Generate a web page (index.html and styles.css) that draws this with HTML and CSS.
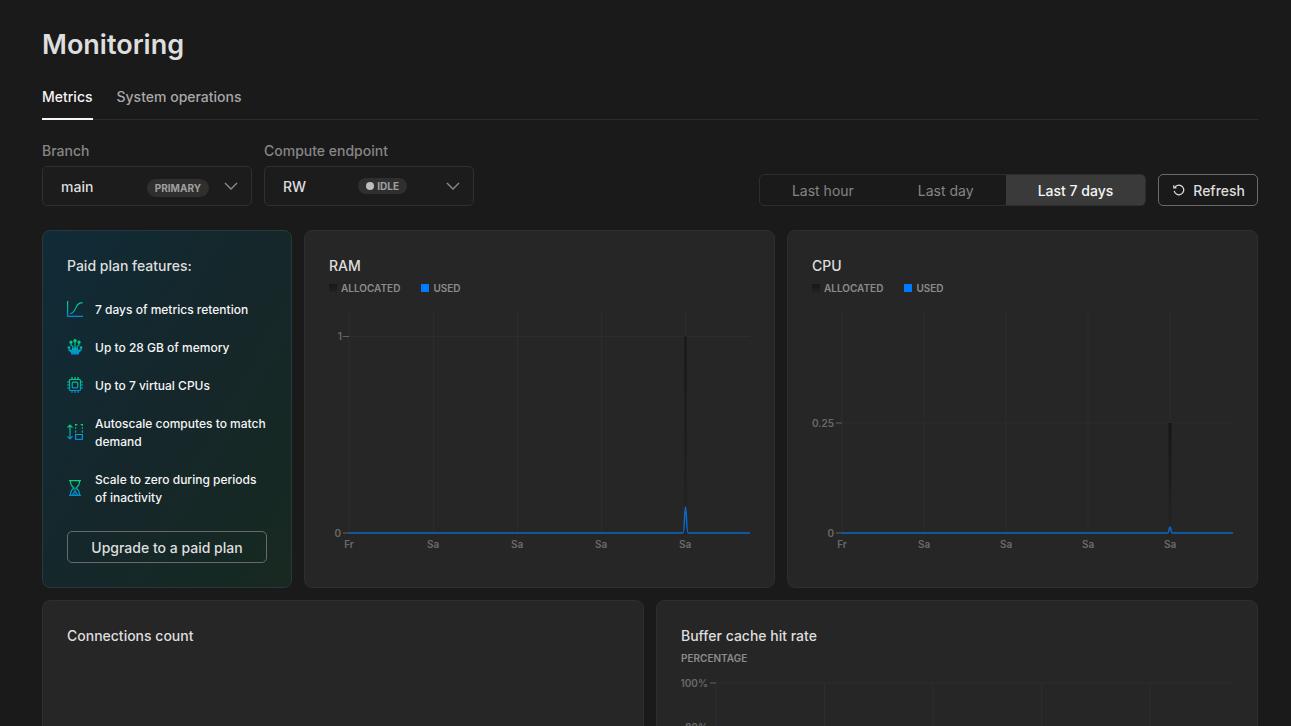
FILE: index.html
```html
<!DOCTYPE html>
<html lang="en">
<head>
<meta charset="utf-8">
<title>Monitoring</title>
<link rel="stylesheet" href="styles.css">
</head>
<body>
<svg class="defs" width="0" height="0" aria-hidden="true">
  <defs>
    <linearGradient id="brand" gradientUnits="userSpaceOnUse" x1="0" y1="0" x2="0" y2="16">
      <stop offset="0" stop-color="#00d878"/>
      <stop offset="1" stop-color="#0088dc"/>
    </linearGradient>
    <linearGradient id="allocated" x1="0" y1="0" x2="0" y2="1">
      <stop offset="0" stop-color="#161616"/>
      <stop offset="1" stop-color="#242424"/>
    </linearGradient>
  </defs>
</svg>
<main class="page">
  <h1 class="title">Monitoring</h1>
  <nav class="tabs">
    <a class="tab tab-active" href="#metrics">Metrics</a>
    <a class="tab" href="#operations">System operations</a>
  </nav>

  <section class="toolbar">
    <div class="field">
      <label class="label" for="branch">Branch</label>
      <div class="select-wrap">
        <select class="select" id="branch"><option>main</option></select>
        <span class="badge badge-primary">PRIMARY</span>
        <svg class="chevron" viewBox="0 0 14 8" width="14" height="8"><path d="M1 1l6 6 6-6"/></svg>
      </div>
    </div>
    <div class="field">
      <label class="label" for="endpoint">Compute endpoint</label>
      <div class="select-wrap">
        <select class="select" id="endpoint"><option>RW</option></select>
        <span class="badge badge-idle"><i class="dot"></i>IDLE</span>
        <svg class="chevron" viewBox="0 0 14 8" width="14" height="8"><path d="M1 1l6 6 6-6"/></svg>
      </div>
    </div>
    <div class="actions">
      <div class="segments">
        <button class="segment">Last hour</button>
        <button class="segment">Last day</button>
        <button class="segment segment-active">Last 7 days</button>
      </div>
      <button class="button">
        <svg class="refresh" viewBox="0 0 12 12" width="12" height="12"><path d="M2 3.200A4.800 4.800 0 1 1 1.200 6.800M.8 1.200v2.600h2.600"/></svg>
        Refresh
      </button>
    </div>
  </section>

  <section class="row row-top">
    <article class="card promo">
      <h2 class="card-title">Paid plan features:</h2>
      <ul class="features">
        <li class="feature">
          <svg class="icon" viewBox="0 0 16 16"><path d="M.6 0v15.400H16M3 12.600c7 0 4-11 12.600-11"/></svg>
          <span>7 days of metrics retention</span>
        </li>
        <li class="feature">
          <svg class="icon" viewBox="0 0 16 16"><g class="fill"><circle cx="8" cy="1.800" r="1.700"/><circle cx="4" cy="3.200" r="1.600"/><circle cx="12" cy="3.200" r="1.600"/><circle cx="2" cy="8.600" r="1.400"/><circle cx="14" cy="8.600" r="1.400"/><path d="M4 15.500v-2.300L2 11l1.200-.8L4.900 11V9.500l3.100-1.300 3.100 1.300V11l1.700-.8L14 11l-2 2.200v2.300z"/></g><path d="M8 3v6M4 4v2l1.800 1.600V10M12 4v2l-1.800 1.600V10M2 9v2.200l2.600 2M14 9v2.200l-2.600 2"/></svg>
          <span>Up to 28 GB of memory</span>
        </li>
        <li class="feature">
          <svg class="icon" viewBox="0 0 16 16"><rect x="2.500" y="2.500" width="11" height="11" rx="1"/><rect x="5.200" y="5.200" width="5.600" height="5.600" rx="1"/><path d="M5 0v2.500M8 0v2.500M11 0v2.500M5 13.500V16M8 13.500V16M11 13.500V16M0 5h2.500M0 8h2.500M0 11h2.500M13.500 5H16M13.500 8H16M13.500 11H16"/></svg>
          <span>Up to 7 virtual CPUs</span>
        </li>
        <li class="feature">
          <svg class="icon" viewBox="0 0 16 16"><path d="M3 1.200v13.600M.5 3.700L3 1.200l2.500 2.500M.5 12.300L3 14.800l2.500-2.500M8.600 10.500h6.800v4.900H8.600zM8.600 8.800V6.500M15.400 8.800V6.500M8.600 4.800V3.200M15.400 4.800V3.200M8.600 1.800V.600h1.700M15.400 1.800V.600h-1.700"/></svg>
          <span>Autoscale computes to match demand</span>
        </li>
        <li class="feature">
          <svg class="icon" viewBox="0 0 16 16"><path d="M2 .6h12M2 15.400h12M3.400.6c0 4 1 5 3.500 7.400-2.500 2.400-3.500 3.400-3.500 7.400M12.600.6c0 4-1 5-3.500 7.400 2.500 2.400 3.500 3.400 3.500 7.400M8 8.500v2M5.300 15L8 11l2.700 4M7.300 14h1.500"/></svg>
          <span>Scale to zero during periods of inactivity</span>
        </li>
      </ul>
      <button class="button button-wide">Upgrade to a paid plan</button>
    </article>

    <article class="card">
      <h2 class="card-title">RAM</h2>
      <div class="legend"><span class="key key-allocated">ALLOCATED</span><span class="key key-used">USED</span></div>
      <svg class="chart" viewBox="0 0 421 250" role="img" aria-label="RAM usage over the last 7 days">
        <path class="grid" d="M20 12v221M104.500 12v221M188.500 12v221M272.500 12v221M356.500 12v221M20 36.500h401"/>
        <path class="tick" d="M14 36.500h6M14 233h6"/>
        <path class="allocated" d="M355 233L355.500 36h2L358 233z"/>
        <path class="used" d="M20 233h334c1.500 0 1.500-26 2.500-26s1 26 2.500 26H421"/>
        <g class="axis axis-y"><text x="13" y="40">1</text><text x="12" y="237">0</text></g>
        <g class="axis axis-x"><text x="20" y="248">Fr</text><text x="104" y="248">Sa</text><text x="188" y="248">Sa</text><text x="272" y="248">Sa</text><text x="356" y="248">Sa</text></g>
      </svg>
    </article>

    <article class="card">
      <h2 class="card-title">CPU</h2>
      <div class="legend"><span class="key key-allocated">ALLOCATED</span><span class="key key-used">USED</span></div>
      <svg class="chart" viewBox="0 0 421 250" role="img" aria-label="CPU usage over the last 7 days">
        <path class="grid" d="M30 12v221M112 12v221M194 12v221M276 12v221M358 12v221M30 123h391"/>
        <path class="tick" d="M24 123h6M24 233h6"/>
        <path class="allocated" d="M356.500 233V123h3v110z"/>
        <path class="used" d="M30 233h325.500c1.500 0 1.500-6 2.500-6s1 6 2.500 6H421"/>
        <g class="axis axis-y"><text x="22" y="127">0.25</text><text x="22" y="237">0</text></g>
        <g class="axis axis-x"><text x="30" y="248">Fr</text><text x="112" y="248">Sa</text><text x="194" y="248">Sa</text><text x="276" y="248">Sa</text><text x="358" y="248">Sa</text></g>
      </svg>
    </article>
  </section>

  <section class="row row-bottom">
    <article class="card">
      <h2 class="card-title">Connections count</h2>
    </article>
    <article class="card">
      <h2 class="card-title">Buffer cache hit rate</h2>
      <div class="legend">PERCENTAGE</div>
      <svg class="chart" viewBox="0 0 552 250" role="img" aria-label="Buffer cache hit rate">
        <path class="grid" d="M35 13v200M143.500 13v200M252 13v200M360.500 13v200M469 13v200M35 13h517M35 57h517"/>
        <path class="tick" d="M29 13h6M29 57h6"/>
        <g class="axis axis-y"><text x="27" y="17">100%</text><text x="27" y="61">80%</text></g>
      </svg>
    </article>
  </section>
</main>
</body>
</html>
```

FILE: styles.css
```css
* {
  box-sizing: border-box;
}

body {
  margin: 0;
  height: 100vh;
  overflow: hidden;
  background: #1a1a1a;
  color: #dedede;
  font: 500 14px/20px Inter, "Liberation Sans", sans-serif;
}

button,
select {
  font: inherit;
  color: inherit;
}

.defs {
  position: absolute;
}

.page {
  padding: 25px 33px 0 42px;
}

.title {
  margin: 0;
  font-size: 27px;
  line-height: 40px;
  font-weight: 600;
}

.tabs {
  display: flex;
  gap: 24px;
  margin-top: 22px;
  border-bottom: 1px solid #2d2d2d;
}

.tab {
  margin-bottom: -1px;
  padding-bottom: 11px;
  border-bottom: 2px solid transparent;
  color: #a8a8a8;
  text-decoration: none;
}

.tab-active {
  color: #f5f5f5;
  border-color: #f5f5f5;
}

.toolbar {
  display: flex;
  align-items: flex-end;
  gap: 12px;
  margin-top: 21px;
}

.field {
  width: 210px;
}

.label {
  display: block;
  margin-bottom: 5px;
  color: #868686;
}

.select-wrap {
  position: relative;
}

.select {
  display: block;
  width: 100%;
  height: 40px;
  padding: 2px 18px 0;
  appearance: none;
  background: #1c1c1c;
  border: 1px solid #303030;
  border-radius: 5px;
}

.badge {
  position: absolute;
  display: flex;
  align-items: center;
  gap: 3px;
  padding: 0 8px;
  border-radius: 9px;
  background: #2f2f2f;
  color: #a0a0a0;
  font-size: 10px;
  font-weight: 700;
  pointer-events: none;
}

.badge-primary {
  top: 13px;
  right: 43px;
  line-height: 18px;
}

.badge-idle {
  top: 12px;
  right: 67px;
  line-height: 16px;
}

.dot {
  width: 8px;
  height: 8px;
  border-radius: 50%;
  background: #bdbdbd;
}

.chevron {
  position: absolute;
  top: 16px;
  right: 14px;
  fill: none;
  stroke: #8c8c8c;
  stroke-width: 1.4;
  pointer-events: none;
}

.actions {
  display: flex;
  gap: 12px;
  margin-left: auto;
}

.segments {
  display: flex;
  height: 32px;
  border: 1px solid #2d2d2d;
  border-radius: 5px;
  overflow: hidden;
}

.segment {
  padding: 2px 32px 0;
  border: 0;
  background: none;
  color: #858585;
  font-weight: 400;
}

.segment-active {
  background: #3a3a3a;
  color: #f5f5f5;
  font-weight: 500;
}

.button {
  display: flex;
  align-items: center;
  justify-content: center;
  gap: 8px;
  height: 32px;
  padding: 2px 12px 0 14px;
  border: 1px solid #6a6a6a;
  border-radius: 5px;
  background: none;
}

.button-wide {
  width: 100%;
  margin-top: 24px;
  padding: 2px 12px 0;
}

.refresh {
  margin-bottom: 2px;
  fill: none;
  stroke: #dedede;
  stroke-width: 1.2;
}

.row {
  display: grid;
  gap: 12px;
}

.row-top {
  grid-template-columns: 250px 1fr 1fr;
  margin-top: 24px;
}

.row-bottom {
  grid-template-columns: 1fr 1fr;
  margin-top: 12px;
}

.card {
  padding: 24px;
  border: 1px solid #2e2e2e;
  border-radius: 8px;
  background: #262626;
}

.promo {
  border-color: #27393b;
  background: linear-gradient(120deg, #102b38, #15272a 50%, #172920);
}

.card-title {
  margin: 0;
  font-size: 14px;
  line-height: 22px;
  font-weight: 500;
}

.features {
  display: grid;
  gap: 20px;
  margin: 24px 0 0;
  padding: 0;
  list-style: none;
  color: #f5f5f5;
  font-size: 12px;
  line-height: 18px;
}

.feature {
  display: flex;
  align-items: center;
  gap: 12px;
}

.icon {
  flex: none;
  width: 16px;
  height: 16px;
  margin-bottom: 2px;
  fill: none;
  stroke: url(#brand);
  stroke-width: 1.2;
}

.fill {
  fill: url(#brand);
  stroke: none;
}

.legend {
  display: flex;
  gap: 21px;
  margin-top: 3px;
  color: #8c8c8c;
  font-size: 10px;
  line-height: 16px;
  font-weight: 600;
}

.key {
  display: flex;
  align-items: center;
  gap: 4px;
}

.key::before {
  content: "";
  width: 8px;
  height: 8px;
}

.key-allocated::before {
  background: linear-gradient(#171717, #212121);
}

.key-used::before {
  background: #007bff;
}

.chart {
  display: block;
  width: 100%;
  margin-top: 4px;
}

.grid {
  fill: none;
  stroke: #2d2d2d;
}

.tick {
  stroke: #626262;
}

.allocated {
  fill: url(#allocated);
}

.used {
  fill: none;
  stroke: #0b68c8;
  stroke-width: 1.5;
}

.axis {
  fill: #6a6a6a;
  font-size: 10px;
  font-weight: 600;
}

.axis-y {
  text-anchor: end;
}

.axis-x {
  text-anchor: middle;
}
```
